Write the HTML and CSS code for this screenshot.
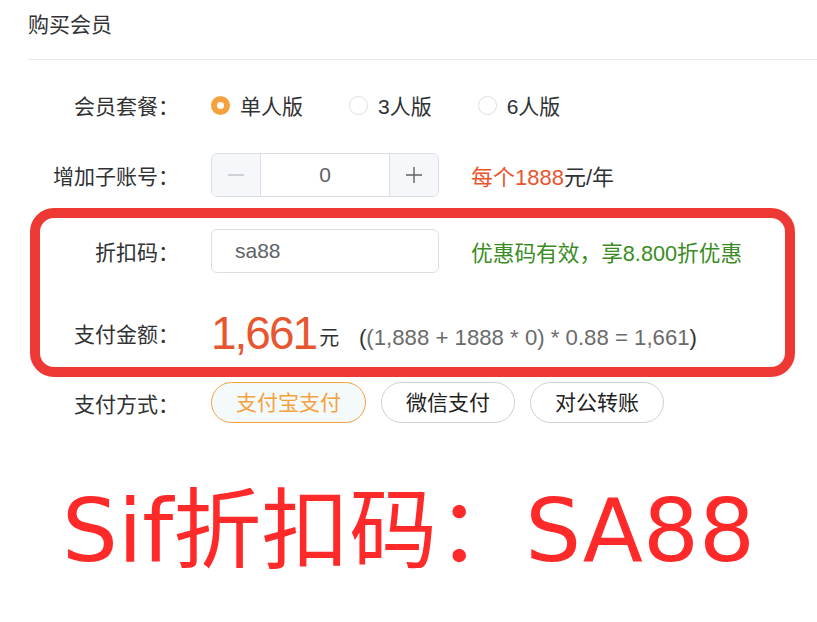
FILE: index.html
```html
<!DOCTYPE html>
<html>
<head>
    <title>购买会员</title>
    <link rel="stylesheet" href="styles.css">
</head>
<body>
    <div class="page">
        <div class="page-title">购买会员</div>

        <div class="buy-form">
            <!-- 会员套餐 -->
            <div class="form-row row-plan">
                <div class="form-label">会员套餐：</div>
                <div class="radio-group">
                    <label class="radio checked"><span class="radio-dot"></span>单人版</label>
                    <label class="radio"><span class="radio-dot"></span>3人版</label>
                    <label class="radio"><span class="radio-dot"></span>6人版</label>
                </div>
            </div>

            <!-- 子账号 -->
            <div class="form-row row-sub">
                <div class="form-label">增加子账号：</div>
                <div class="num-input">
                    <span class="num-btn disabled">
                        <svg width="18" height="18" viewBox="0 0 18 18"><path d="M1 9h16" stroke="currentColor" stroke-width="1.4"/></svg>
                    </span>
                    <span class="num-value">0</span>
                    <span class="num-btn">
                        <svg width="18" height="18" viewBox="0 0 18 18"><path d="M1 9h16M9 1v16" stroke="currentColor" stroke-width="1.4"/></svg>
                    </span>
                </div>
                <div class="hint"><span class="hint-price">每个1888</span>元/年</div>
            </div>

            <!-- 标注框内：折扣码 + 金额 -->
            <div class="marked">
                <div class="form-row row-code">
                    <div class="form-label">折扣码：</div>
                    <div class="text-input">sa88</div>
                    <div class="hint hint-ok">优惠码有效，享8.800折优惠</div>
                </div>

                <div class="form-row row-amount">
                    <div class="form-label">支付金额：</div>
                    <div class="amount">
                        <span class="amount-num">1,661</span><span class="amount-unit">元</span>
                        <span class="formula"><b>(</b>(1,888 + 1888 * 0) * 0.88 = 1,661<b>)</b></span>
                    </div>
                </div>

                <div class="mark-box"></div>
            </div>

            <!-- 支付方式 -->
            <div class="form-row row-pay">
                <div class="form-label">支付方式：</div>
                <div class="pay-group">
                    <span class="pay-btn active">支付宝支付</span>
                    <span class="pay-btn">微信支付</span>
                    <span class="pay-btn">对公转账</span>
                </div>
            </div>
        </div>

        <div class="promo">Sif折扣码：SA88</div>
    </div>
</body>
</html>
```

FILE: styles.css
```css
:root {
    --text: #303133;
    --text-light: #606266;
    --border: #dcdfe6;
    --orange: #f5a23e;
    --price: #e8562f;
    --ok: #3b8c24;
}

body {
    margin: 0;
    background: #fff;
    font-family: "Liberation Sans", "Noto Sans CJK SC", sans-serif;
    color: var(--text);
}

.page {
    padding-left: 28px;
}

.page-title {
    height: 59px;
    line-height: 50px;
    font-size: 21px;
    color: #333;
    border-bottom: 1px solid #e8e9ec;
}

.buy-form {
    padding-top: 23px;
}

.form-row {
    display: flex;
    align-items: center;
    height: 44px;
    font-size: 21px;
}

.form-label {
    width: 151px;
    flex-shrink: 0;
    text-align: right;
    margin-right: 32px;
}

.row-sub { margin-top: 26px; }
.marked { position: relative; margin-top: 32px; }
.row-amount { margin-top: 38px; }
.row-pay { margin-top: 27px; height: 41px; }

/* 单选 */
.radio-group {
    display: flex;
    align-items: center;
}

.radio {
    display: flex;
    align-items: center;
    margin-right: 46px;
}

.radio-dot {
    box-sizing: border-box;
    width: 19px;
    height: 19px;
    margin-right: 10px;
    border: 1px solid var(--border);
    border-radius: 50%;
    background: #fff;
}

.radio.checked .radio-dot {
    border: 6px solid var(--orange);
    background: #fff;
}

/* 计数器 */
.num-input {
    box-sizing: border-box;
    display: flex;
    width: 228px;
    height: 44px;
    border: 1px solid var(--border);
    border-radius: 6px;
    overflow: hidden;
}

.num-btn {
    display: flex;
    align-items: center;
    justify-content: center;
    width: 48px;
    background: #f5f7fa;
    color: var(--text-light);
}

.num-btn:first-child { border-right: 1px solid var(--border); }
.num-btn:last-child { border-left: 1px solid var(--border); }
.num-btn.disabled { color: #c0c4cc; }

.num-value {
    flex: 1;
    line-height: 42px;
    text-align: center;
    color: var(--text-light);
}

.text-input {
    box-sizing: border-box;
    width: 228px;
    height: 44px;
    line-height: 42px;
    padding: 0 23px;
    border: 1px solid var(--border);
    border-radius: 6px;
    color: var(--text-light);
}

.hint {
    margin-left: 32px;
    font-size: 22px;
}

.hint-price { color: var(--price); }
.hint-ok { color: var(--ok); font-size: 21.7px; }

/* 金额 */
.amount {
    white-space: nowrap;
}

.amount-num {
    font-size: 46px;
    letter-spacing: -2px;
    color: var(--price);
}

.amount-unit {
    margin-left: 3px;
    font-size: 20px;
    vertical-align: 4px;
}

.formula {
    margin-left: 14px;
    font-size: 22.2px;
    color: #6b6b6b;
    vertical-align: 4px;
}

.formula b {
    font-weight: normal;
    color: var(--text);
}

/* 红色标注框 */
.mark-box {
    position: absolute;
    left: 2px;
    top: -21px;
    width: 765px;
    height: 169px;
    box-sizing: border-box;
    border: 10px solid #ee3834;
    border-radius: 24px;
    pointer-events: none;
}

/* 支付方式 */
.pay-group {
    display: flex;
    gap: 15px;
}

.pay-btn {
    box-sizing: border-box;
    height: 41px;
    line-height: 39px;
    padding: 0 24px;
    border: 1px solid #cfcfcf;
    border-radius: 21px;
    font-size: 21px;
    color: #222;
}

.pay-btn.active {
    border-color: var(--orange);
    background: #f4f9fc;
    color: var(--orange);
}

/* 底部大字 */
.promo {
    margin: 58px 0 0 -28px;
    text-align: center;
    font-family: "DejaVu Sans", "Noto Sans CJK SC", sans-serif;
    font-size: 88px;
    line-height: 100px;
    color: #fe2a2a;
}
```
